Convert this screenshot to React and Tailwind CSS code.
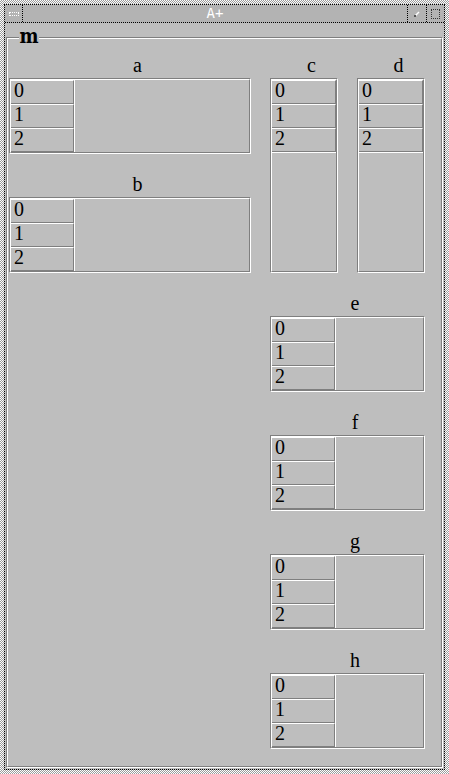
import React from "react";

const serif = { fontFamily: '"Liberation Serif", "Times New Roman", serif' };

function Cells({ wide }) {
  return (
    <div className={wide ? "w-[63px] flex flex-col" : "w-full flex flex-col"}>
      {["0", "1", "2"].map((n) => (
        <div
          key={n}
          className="h-[24px] pl-[3px] border-t border-r border-b border-t-white border-r-[#7f7f7f] border-b-[#7f7f7f] text-[20px] leading-[18px] text-black"
        >
          {n}
        </div>
      ))}
    </div>
  );
}

function Table({ label, wide = true, className }) {
  return (
    <div className={`flex flex-col ${className}`}>
      {/* Label */}
      <div className="h-[23px] pl-[15px] text-center text-[20px] leading-[20px] text-black">
        {label}
      </div>
      {/* Etched frame */}
      <div className="flex-1 border border-t-[#7f7f7f] border-l-[#7f7f7f] border-b-white border-r-white">
        <div
          className={`h-full border border-t-white border-l-white border-b-[#7f7f7f] border-r-[#7f7f7f] flex ${
            wide ? "flex-row" : "flex-col"
          }`}
        >
          <Cells wide={wide} />
          {wide ? (
            <div className="flex-1 border-l border-l-white" />
          ) : (
            <div className="flex-1 border-t border-t-white" />
          )}
        </div>
      </div>
    </div>
  );
}

function TitleBar() {
  return (
    <div className="h-[18px] flex border-b border-dotted border-black bg-[#b3b3b3]">
      <div className="w-[18px] flex items-center justify-center border-r border-dotted border-black">
        <div className="w-[10px] h-[4px] border border-dotted border-white" />
      </div>
      <div
        className="flex-1 text-center text-[14px] leading-[17px] text-white"
        style={{ fontFamily: '"DejaVu Sans Mono", "Liberation Mono", monospace' }}
      >
        A+
      </div>
      <div className="w-[19px] flex items-center justify-center border-l border-dotted border-black">
        <svg width="6" height="6" viewBox="0 0 6 6">
          <path d="M1 5 L5 1" stroke="#ffffff" strokeWidth="1.5" />
          <rect x="0" y="4" width="2" height="2" fill="#555" />
        </svg>
      </div>
      <div className="w-[18px] flex items-center justify-center border-l border-dotted border-black">
        <div className="w-[9px] h-[10px] border border-dotted border-[#333]" />
      </div>
    </div>
  );
}

export default function App() {
  return (
    <div className="w-[449px] h-[774px] p-[4px] [background-image:repeating-conic-gradient(#9c9c9c_0%_25%,#ffffff_0%_50%)] [background-size:2px_2px]">
      <div className="h-full flex flex-col border border-dotted border-black bg-[#bebebe]" style={serif}>
        <TitleBar />

        {/* Group box "m" */}
        <div className="relative flex-1 mx-[1px] mt-[14px] mb-[1px] border border-t-[#7f7f7f] border-l-[#7f7f7f] border-b-white border-r-white">
          <div
            className="absolute -top-[11px] left-[12px] w-[20px] h-[20px] bg-[#bebebe] text-center text-[20px] leading-[18px] font-bold text-black"
            style={{ fontFamily: '"DejaVu Serif Condensed", "Liberation Serif", serif' }}
          >
            m
          </div>
          <div className="h-full border border-t-white border-l-white border-b-[#7f7f7f] border-r-[#7f7f7f] pl-[1px] pt-[16px] flex gap-[19px]">
            {/* Left column */}
            <div className="w-[242px] flex flex-col gap-[20px]">
              <Table label="a" className="h-[99px]" />
              <Table label="b" className="h-[99px]" />
            </div>

            {/* Right column */}
            <div className="w-[155px] flex flex-col gap-[20px]">
              <div className="flex justify-between">
                <Table label="c" wide={false} className="w-[68px] h-[218px]" />
                <Table label="d" wide={false} className="w-[68px] h-[218px]" />
              </div>
              <Table label="e" className="h-[99px]" />
              <Table label="f" className="h-[99px]" />
              <Table label="g" className="h-[99px]" />
              <Table label="h" className="h-[99px]" />
            </div>
          </div>
        </div>
      </div>
    </div>
  );
}
